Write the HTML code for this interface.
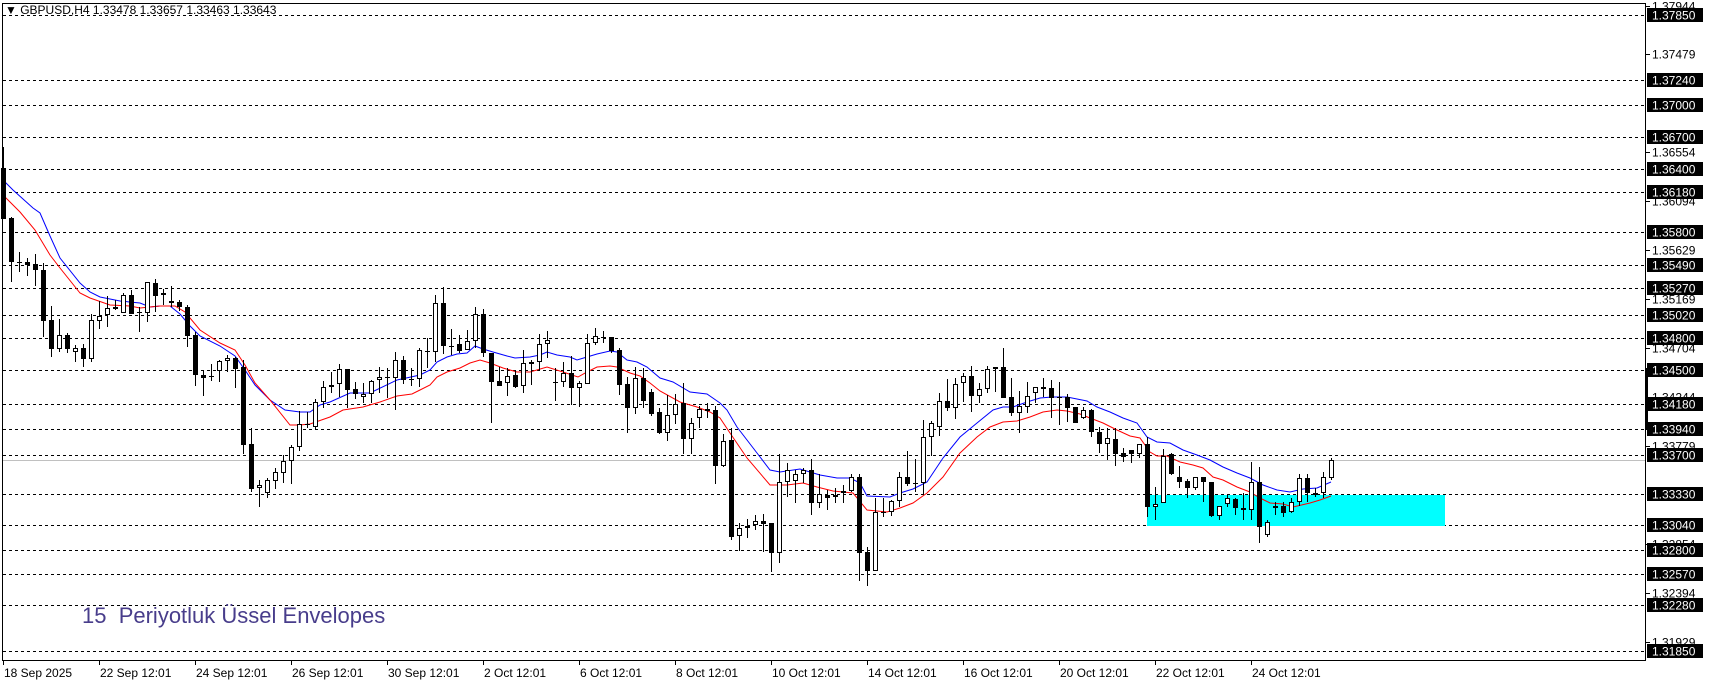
<!DOCTYPE html>
<html><head><meta charset="utf-8"><style>
html,body{margin:0;padding:0;background:#fff;}
svg{display:block;}
text{font-family:"Liberation Sans",sans-serif;}
</style></head><body>
<svg id="s" width="1709" height="684" viewBox="0 0 1709 684" xmlns="http://www.w3.org/2000/svg">
<rect width="1709" height="684" fill="#fff"/>
<g id="grid" stroke="#000" stroke-width="1" stroke-dasharray="3,3"></g>
<line x1="3" y1="460.5" x2="1645" y2="460.5" stroke="#c0c0c0"/>
<rect x="1147" y="495" width="298" height="31" fill="#00ffff"/>
<polyline fill="none" stroke="#0000ff" stroke-width="1" points="3,180 13,190 33,208 40,213 50,236 60,258 80,283 90,292 100,297 120,301 140,303 150,307 160,306 170,306 180,314 190,326 200,336 220,346 235,356 245,370 255,385 270,400 285,410 300,412 310,412 320,405 330,402 350,393 370,393 397,380 420,375 430,370 437,362 447,357 457,354 467,353 475,346 483,349 493,352 507,356 515,358 530,357 540,355 547,352 557,355 570,357 577,360 587,357 597,354 610,351 617,352 627,360 637,362 647,367 660,378 673,382 690,392 707,394 720,403 727,410 737,427 757,453 770,470 780,472 800,469 820,475 837,478 850,478 860,483 867,496 890,497 900,493 913,489 927,482 943,458 960,437 977,423 993,410 1003,407 1013,407 1027,402 1040,398 1052,397 1067,397 1077,399 1087,401 1097,407 1110,412 1123,418 1137,423 1147,437 1157,442 1170,443 1183,450 1197,455 1210,460 1223,467 1237,473 1250,478 1263,485 1277,490 1290,492 1303,489 1317,488 1331,482"/>
<polyline fill="none" stroke="#ff0000" stroke-width="1" points="3,195 20,212 35,230 50,255 60,268 80,293 90,298 110,305 130,306 140,308 160,306 175,306 185,312 200,330 220,343 235,350 245,365 255,383 270,400 290,425 300,425 310,424 330,417 343,410 363,407 380,402 397,396 412,394 420,390 430,385 437,377 447,372 460,368 470,363 480,360 490,363 503,368 517,372 530,372 547,367 563,372 578,377 587,372 597,367 610,366 617,367 630,373 640,376 650,383 660,391 680,402 697,407 710,412 720,418 730,433 747,458 770,485 787,485 803,483 817,487 833,491 853,493 867,510 887,512 900,508 913,503 927,493 943,477 960,453 977,437 990,427 1003,422 1017,421 1030,417 1043,412 1057,410 1067,411 1080,414 1090,418 1103,423 1117,430 1130,436 1140,438 1150,452 1157,456 1167,456 1180,462 1193,465 1203,468 1213,477 1223,480 1237,487 1250,492 1260,498 1270,503 1283,504 1293,507 1310,503 1320,500 1331,496"/>
<g id="candles"></g>
<g id="axis"></g>
<rect x="2.5" y="3.5" width="1643" height="657" fill="none" stroke="#000"/>
<rect x="1645" y="368" width="3" height="62" fill="#000"/>
<text x="5" y="14" font-size="12" fill="#000">▼ GBPUSD,H4 1.33478 1.33657 1.33463 1.33643</text>
<text x="82" y="623" font-size="22" fill="#483d8b" xml:space="preserve">15  Periyotluk Üssel Envelopes</text>
<g id="dates"></g>
</svg>
<script>
var NS="http://www.w3.org/2000/svg";
function el(p,n,a,t){var e=document.createElementNS(NS,n);for(var k in a)e.setAttribute(k,a[k]);if(t!==undefined)e.textContent=t;p.appendChild(e);return e;}
function Y(p){return 15+(1.3785-p)*10595;}
var grid=document.getElementById('grid'),axis=document.getElementById('axis');
var lv=[1.3785,1.3724,1.3700,1.3670,1.3640,1.3618,1.3580,1.3549,1.3527,1.3502,1.3480,1.3450,1.3418,1.3394,1.3370,1.3333,1.3304,1.3280,1.3257,1.3228,1.3185];
lv.forEach(function(p){var y=Math.round(Y(p))+0.5;el(grid,'line',{x1:3,y1:y,x2:1645,y2:y});});
var pl=[1.37944,1.37479,1.36554,1.36094,1.35629,1.35169,1.34704,1.34244,1.33779,1.32854,1.32394,1.31929];
pl.forEach(function(p){var y=Math.round(Y(p));if(p==1.37944)y=6;el(axis,'line',{x1:1645,y1:y+0.5,x2:1650,y2:y+0.5,stroke:'#000'});el(axis,'text',{x:1652,y:y+4.5,'font-size':12,fill:'#000'},p.toFixed(5));});
lv.forEach(function(p){var y=Math.round(Y(p));el(axis,'rect',{x:1647,y:y-7,width:56,height:14,fill:'#000'});el(axis,'text',{x:1652,y:y+4.5,'font-size':12,fill:'#fff'},p.toFixed(5));});
var d=[[168,147,219,219],[218,217,282,262],[262,252,272,262],[262,258,276,265],[264,254,286,270],[270,263,337,321],[320,306,357,349],[349,319,352,335],[335,333,353,349],[352,345,362,348],[348,344,367,359],[359,314,362,320],[321,301,329,316],[315,296,327,308],[307,300,310,309],[313,293,313,295],[295,290,314,314],[312,307,332,312],[313,282,322,282],[283,279,312,296],[295,289,305,293],[301,286,307,303],[302,300,311,307],[307,305,347,336],[335,332,386,375],[375,370,396,378],[376,364,381,377],[371,360,382,361],[361,355,372,358],[358,357,388,369],[367,360,454,445],[444,428,492,489],[488,480,507,485],[493,478,498,480],[481,468,489,472],[473,455,483,461],[461,445,484,447],[447,411,451,424],[424,412,428,424],[427,399,429,402],[402,381,408,387],[385,372,393,387],[384,364,397,369],[369,369,408,390],[389,382,399,394],[397,383,403,394],[394,380,403,381],[380,367,393,377],[377,368,398,377],[378,352,410,360],[360,356,384,380],[379,368,386,379],[379,348,387,350],[351,338,368,351],[352,295,362,303],[303,287,354,346],[346,329,355,346],[344,335,353,351],[350,330,350,341],[341,307,348,314],[314,309,357,353],[353,353,423,382],[381,367,386,386],[383,368,396,376],[375,370,388,387],[386,350,393,363],[362,360,385,364],[362,334,370,344],[344,331,358,340],[382,368,401,382],[382,362,387,373],[373,356,405,388],[388,381,407,383],[384,334,384,343],[343,328,345,336],[337,331,343,337],[337,337,353,351],[350,348,395,385],[384,377,433,408],[408,367,414,378],[378,368,408,401],[392,389,416,414],[412,408,434,433],[433,395,441,415],[415,394,424,404],[403,383,454,439],[439,418,454,423],[418,406,428,409],[409,403,418,411],[410,406,484,466],[466,434,467,441],[440,428,540,537],[536,523,551,528],[528,519,538,526],[525,515,530,521],[521,514,552,524],[523,523,572,553],[553,454,563,482],[482,463,497,470],[481,470,503,474],[474,468,483,470],[470,459,515,503],[503,474,508,494],[495,490,510,498],[497,488,503,495],[493,485,503,491],[491,474,492,477],[477,474,581,553],[552,547,586,571],[571,498,571,512],[512,498,517,512],[512,500,516,501],[501,472,507,477],[477,451,486,484],[483,459,492,483],[483,420,495,437],[437,421,456,423],[427,393,436,401],[401,379,411,408],[408,378,419,384],[383,373,402,376],[376,366,412,396],[396,383,403,389],[389,366,393,369],[369,367,392,367],[367,348,398,398],[397,378,416,413],[413,391,433,406],[407,382,413,396],[393,387,403,387],[387,378,397,389],[388,380,418,398],[397,382,425,397],[397,394,422,408],[407,407,423,423],[418,407,419,410],[410,409,437,432],[432,427,453,444],[444,428,460,438],[439,428,466,454],[453,448,462,457],[450,450,463,454],[454,444,458,444],[444,437,517,507],[507,487,520,504],[503,449,503,456],[454,453,475,474],[477,466,488,482],[481,479,498,488],[488,477,490,477],[477,477,502,482],[482,482,517,516],[516,506,520,506],[504,495,507,498],[499,498,515,508],[508,493,520,510],[510,462,520,482],[482,467,543,527],[535,520,537,522],[508,502,515,506],[506,502,517,513],[512,498,513,502],[502,474,506,478],[478,474,502,493],[493,488,497,495],[493,472,498,477],[478,458,480,460]];
var cg=document.getElementById('candles');
d.forEach(function(c,i){var x=Math.round(3.3+8*i);var o=c[0],h=c[1],l=c[2],cl=c[3];
var top=Math.min(o,cl),bot=Math.max(o,cl);
el(cg,'rect',{x:x,y:h,width:1,height:Math.max(1,l-h),fill:'#000'});
if(bot-top<1){el(cg,'rect',{x:x-2,y:top,width:5,height:1,fill:'#000'});}
else if(cl>o){el(cg,'rect',{x:x-2,y:top,width:5,height:bot-top,fill:'#000'});}
else{el(cg,'rect',{x:x-1.5,y:top+0.5,width:4,height:bot-top-1,fill:'#fff',stroke:'#000','stroke-width':1});}
});
var dg=document.getElementById('dates');
var dl=["18 Sep 2025","22 Sep 12:01","24 Sep 12:01","26 Sep 12:01","30 Sep 12:01","2 Oct 12:01","6 Oct 12:01","8 Oct 12:01","10 Oct 12:01","14 Oct 12:01","16 Oct 12:01","20 Oct 12:01","22 Oct 12:01","24 Oct 12:01"];
dl.forEach(function(t,i){var x=3+96*i;el(dg,'line',{x1:x+0.5,y1:660,x2:x+0.5,y2:665,stroke:'#000'});el(dg,'text',{x:x+1,y:677,'font-size':12,fill:'#000'},t);});
</script>
</body></html>
